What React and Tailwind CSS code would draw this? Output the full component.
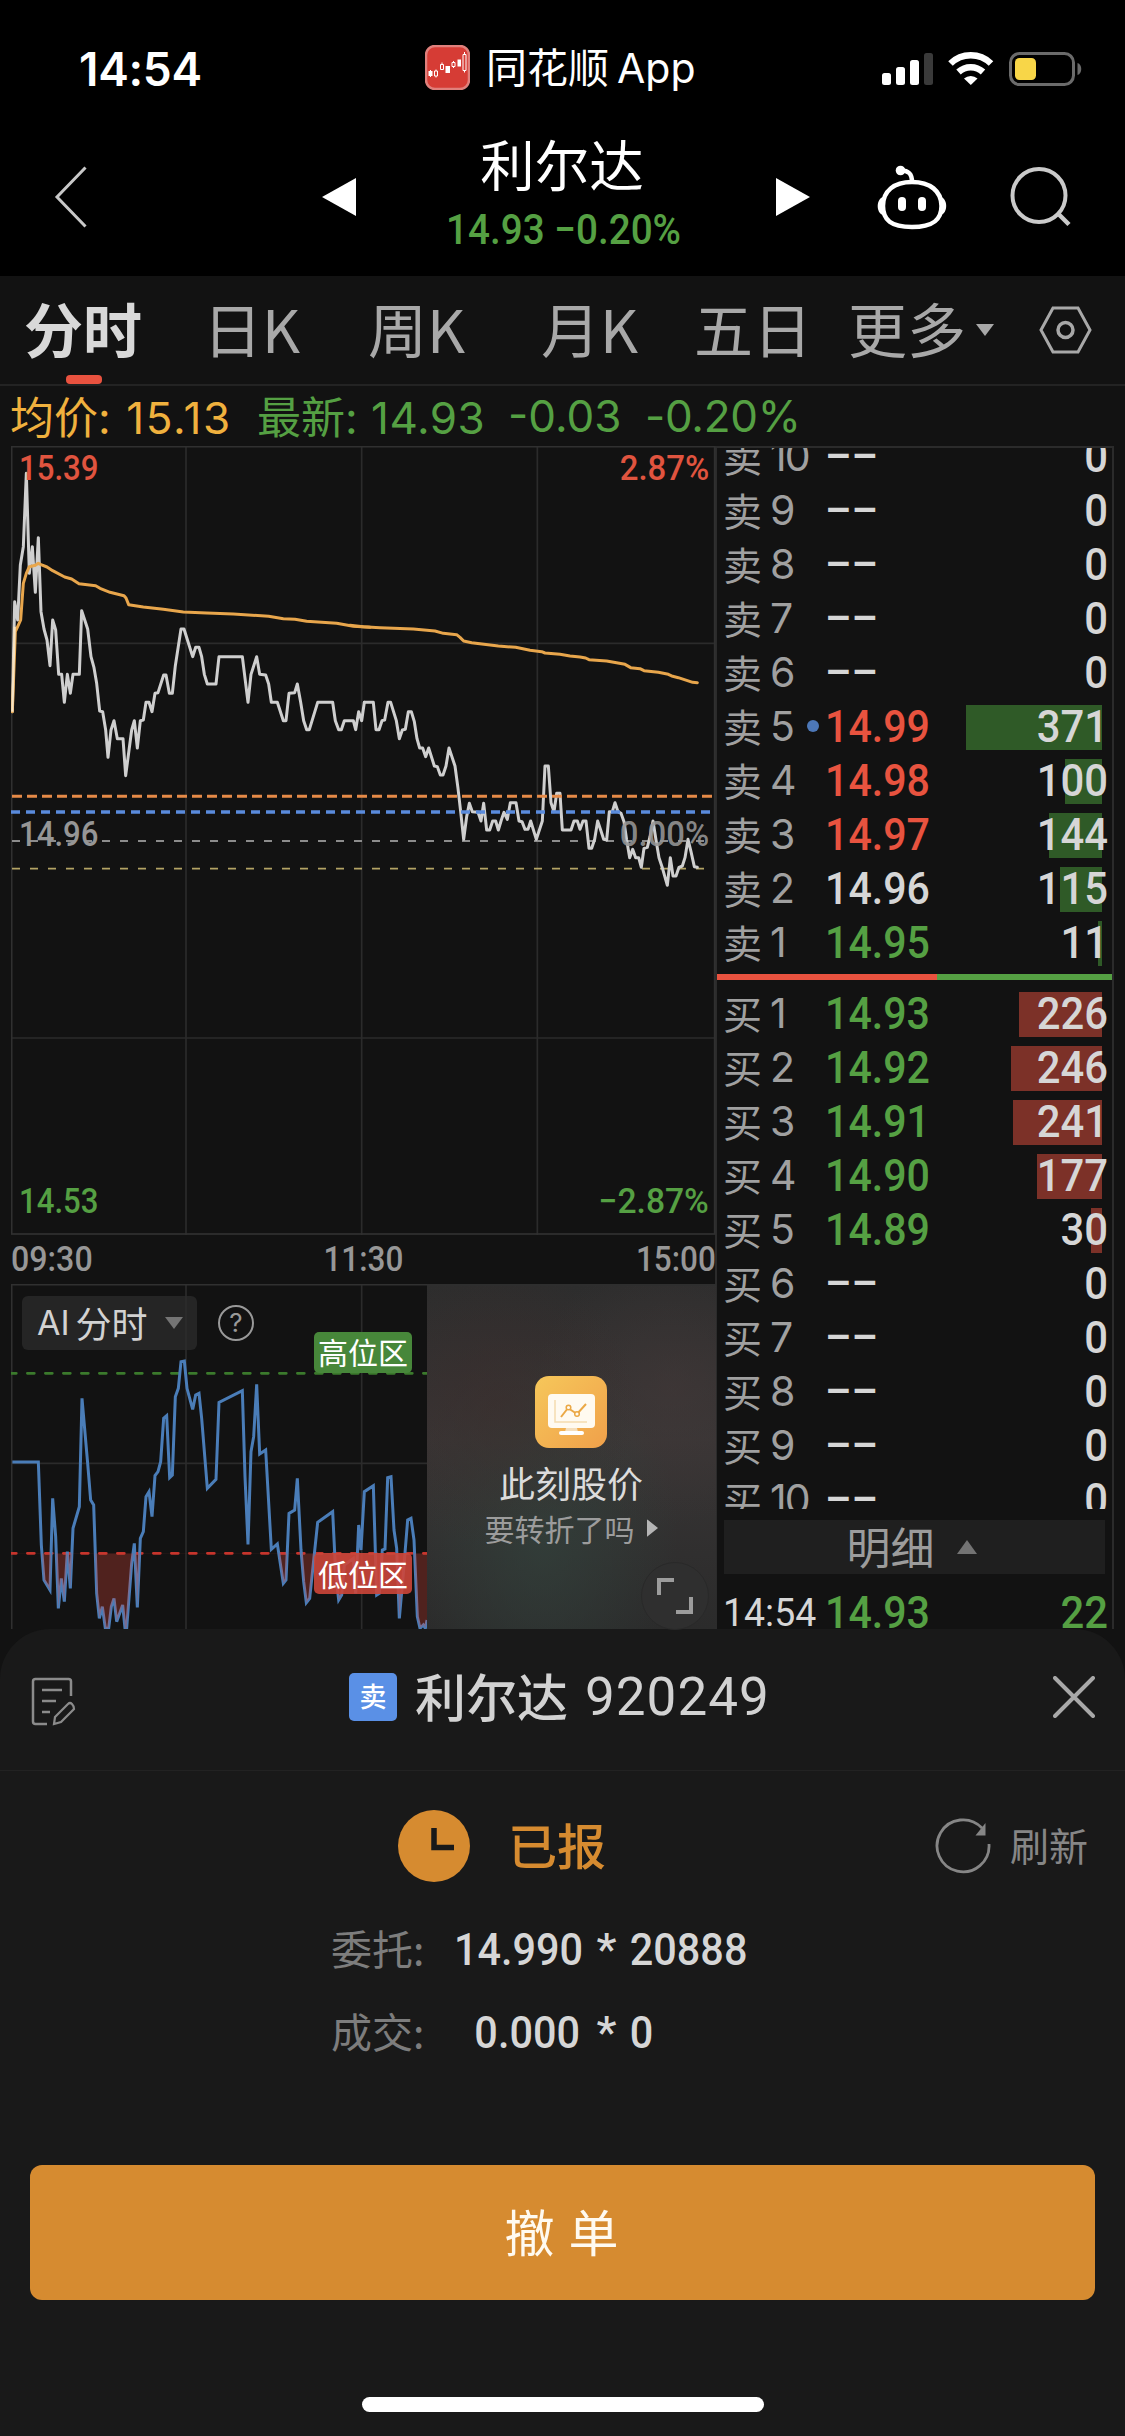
import React from 'react';
import clsx from 'clsx';

const tabs = [
  { label: '分时', width: 'w-[179px]', active: true },
  { label: '日K', width: 'w-[165px]' },
  { label: '周K', width: 'w-[173px]' },
  { label: '月K', width: 'w-[153px]' },
  { label: '五日', width: 'w-[154px]' },
];

const sells = [
  { level: 10 }, { level: 9 }, { level: 8 }, { level: 7 }, { level: 6 },
  { level: 5, price: '14.99', color: 'text-[#e8533f]', vol: 371, bar: 136, mine: true },
  { level: 4, price: '14.98', color: 'text-[#e8533f]', vol: 100, bar: 37 },
  { level: 3, price: '14.97', color: 'text-[#e8533f]', vol: 144, bar: 53 },
  { level: 2, price: '14.96', color: 'text-[#d6d6d6]', vol: 115, bar: 42 },
  { level: 1, price: '14.95', color: 'text-[#55a043]', vol: 11, bar: 4 },
];

const buys = [
  { level: 1, price: '14.93', color: 'text-[#55a043]', vol: 226, bar: 83 },
  { level: 2, price: '14.92', color: 'text-[#55a043]', vol: 246, bar: 91 },
  { level: 3, price: '14.91', color: 'text-[#55a043]', vol: 241, bar: 89 },
  { level: 4, price: '14.90', color: 'text-[#55a043]', vol: 177, bar: 65 },
  { level: 5, price: '14.89', color: 'text-[#55a043]', vol: 30, bar: 11 },
  { level: 6 }, { level: 7 }, { level: 8 }, { level: 9 }, { level: 10 },
];

const PRICE_AM = '37,815 44,485 53,540 61,375 70,320 79,100 88,400 97,320 106,457 115,293 123,515 132,567 141,600 150,677 158,540 167,570 176,703 185,703 193,787 202,703 211,760 219,703 238,703 245,512 263,567 273,650 282,683 290,730 299,813 308,815 317,870 324,952 333,870 342,842 352,896 369,896 377,1007 395,870 403,842 412,924 421,842 430,840 438,787 447,787 456,815 465,760 474,758 491,705 498,705 508,760 517,760 526,677 543,567 552,567 578,650 587,622 597,622 605,650 613,703 622,732 648,732 657,650 727,650 744,787 753,703 770,650 779,703 797,705 806,732 814,787 832,787 850,842 858,842 867,760 884,758 892,732 902,787 911,842 920,869 928,869 953,787 998,787 1006,842 1016,869 1024,869 1033,842 1060,842 1067,869 1076,815 1085,842 1093,787';
const PRICE_PM = '43,787 70,787 78,869 87,869 96,842 104,840 114,787 122,787 139,842 148,896 157,870 166,868 175,815 184,815 193,845 201,896 209,924 218,924 227,950 236,924 253,978 262,980 271,1005 279,1005 288,978 297,924 315,978 324,1045 332,1115 341,1198 350,1130 358,1090 367,1115 384,1117 393,1143 401,1090 410,1170 419,1170 428,1143 437,1143 445,1170 454,1140 462,1117 472,1138 481,1088 498,1088 507,1143 516,1145 525,1168 534,1168 542,1143 559,1198 577,1143 585,978 595,978 603,1088 612,1115 620,1060 630,1060 637,1170 663,1170 672,1143 682,1143 690,1168 699,1143 708,1143 717,1225 725,1225 734,1198 743,1143 752,1170 761,1198 770,1200 778,1115 787,1115 795,1088 804,1115 813,1120 822,1145 830,1200 839,1253 848,1228 857,1253 866,1253 874,1282 882,1225 892,1222 900,1190 909,1143 918,1200 927,1253 936,1280 952,1336 961,1253 969,1308 978,1308 987,1282 997,1278 1005,1253 1014,1198 1023,1235 1033,1280 1042,1282';
const AVG_AM = '37,815 46,575 53,560 62,540 70,430 79,400 88,380 106,376 115,370 123,374 141,381 158,392 194,411 215,417 237,431 262,434 287,437 300,445 330,457 372,467 378,474 386,494 430,501 490,508 550,516 620,519 700,522 806,529 850,536 885,538 920,544 1010,550 1060,559 1110,562';
const AVG_PM = '0,556 40,560 90,563 190,567 255,573 280,580 320,584 330,592 341,603 365,608 445,618 497,622 540,631 575,635 585,639 630,643 660,648 690,651 707,654 717,659 770,663 825,673 842,683 870,686 882,692 925,697 955,703 968,709 985,713 1010,721 1028,727 1042,728';
const AI_LINE = '37,846 115,846 124,1095 132,1200 150,1230 158,955 167,1070 175,1285 184,1195 193,1265 202,1115 211,1225 219,1045 238,980 246,655 263,850 272,960 281,975 290,1240 298,1315 307,1280 316,1345 326,1345 334,1280 342,1255 350,1325 368,1275 375,1345 380,1345 395,1150 403,1090 412,1282 421,1075 430,1055 438,950 447,935 456,1010 465,887 474,875 482,845 491,715 500,707 509,893 517,885 526,650 535,625 543,545 553,543 561,625 578,688 587,645 597,640 605,715 622,925 648,898 657,667 727,632 735,890 744,1093 753,815 761,770 770,613 779,822 797,810 814,1108 832,1092 850,1210 858,1200 867,1000 884,990 892,895 903,1110 911,1205 919,1268 929,1255 953,1027 998,995 1007,1180 1016,1260 1025,1245 1033,1155 1060,1135 1067,1240 1076,1035 1083,1110 1093,935 1120,917 1130,1245 1138,1240 1147,1110 1155,1107 1163,893 1173,890 1182,1050 1190,1105 1198,1315 1210,1180 1223,1020 1233,1015 1242,1080 1252,1310 1260,1345 1270,1335 1276,1345 1281,1320';

function StatusBar() {
  return (
    <div className="h-[118px] flex items-start bg-black text-white">
      <div className="w-[425px] pl-[79px] pt-[42px] text-[46px] leading-[54px] font-semibold tracking-[-0.3px] font-['Inter']">14:54</div>
      <svg className="mt-[45px] w-[45px] h-[45px]" viewBox="0 0 45 45">
        <rect x="1" y="1" width="43" height="43" rx="9" fill="#d63c35" stroke="#e0807c" strokeWidth="2.5" />
        <g fill="#fff">
          <rect x="3.5" y="26" width="4" height="5" />
          <rect x="5" y="25" width="1" height="7" />
          <rect x="20.5" y="21" width="4.5" height="7" />
          <rect x="32.5" y="14.5" width="3.5" height="7" />
        </g>
        <path
          d="M9.5 26h3v5h-3zM11 24.5v1.5M11 31v1.5M15.5 19.5h3v5h-3zM17 17.5v2M27 17.5h3v4h-3zM28.5 16v1.5M28.5 21.5v1.5M38 9.5h3v16h-3zM39.5 7v2.5M39.5 25.5v2"
          fill="none" stroke="#fff" strokeWidth="1"
        />
      </svg>
      <div className="w-[409px] pl-[16px] pt-[38px] text-[41px] leading-[54px] whitespace-nowrap">
        同花顺<span className="font-['Inter'] ml-[8px]">App</span>
      </div>
      <svg className="mt-[52px] w-[205px] h-[36px]" viewBox="0 0 205 36">
        <g fill="#fff">
          <rect x="3" y="21" width="9" height="12" rx="2.5" />
          <rect x="17" y="15" width="9" height="18" rx="2.5" />
          <rect x="31" y="8" width="9" height="25" rx="2.5" />
        </g>
        <rect x="45" y="1" width="9" height="32" rx="2.5" fill="#3a3a3a" />
        <g fill="none" stroke="#fff" strokeWidth="6.5">
          <path d="M71.5 11.5a29 29 0 0 1 40.5 0" />
          <path d="M79.5 20a18 18 0 0 1 24.5 0" />
        </g>
        <path d="M85 26.5a10 10 0 0 1 13.5 0l-6.7 6.5z" fill="#fff" />
        <rect x="131.5" y="1.5" width="63" height="31" rx="9" fill="none" stroke="#6b6b6b" strokeWidth="3" />
        <rect x="136" y="6" width="21" height="22" rx="4.5" fill="#f8d648" />
        <path d="M198.500 11c5 1 5 11 0 12z" fill="#6b6b6b" />
      </svg>
    </div>
  );
}

function Header() {
  return (
    <div className="h-[158px] flex items-center bg-black text-white">
      <div className="w-[322px] pl-[54px]">
        <svg className="w-[34px] h-[62px]" viewBox="0 0 34 62"><path d="M31.5 1.5L3 31l28.5 29.5" fill="none" stroke="#c8c8c8" strokeWidth="3" /></svg>
      </div>
      <svg className="w-[34px] h-[38px]" viewBox="0 0 34 38"><path d="M34 0v38L0 19z" fill="#fff" /></svg>
      <div className="w-[420px] pr-[8px] flex flex-col items-center">
        <div className="text-[54.5px] leading-[61px] h-[65px]">利尔达</div>
        <div className="text-[42px] leading-[65px] h-[65px] pl-[4px] text-[#55a043] font-['Roboto'] font-medium scale-x-[0.92] whitespace-nowrap">14.93 −0.20%</div>
      </div>
      <svg className="w-[34px] h-[38px]" viewBox="0 0 34 38"><path d="M0 0v38L34 19z" fill="#fff" /></svg>
      <svg className="ml-[66px] w-[72px] h-[66px]" viewBox="0 0 72 66">
        <g fill="none" stroke="#fff" strokeWidth="4.5">
          <path d="M36 18C54 18 65.5 27 65.5 42C65.5 56 57 63 36 63S7 56 7 42C7 27 18 18 36 18z" />
          <path d="M36 18C36 9 32 6.5 25 6.5" />
        </g>
        <circle cx="24.5" cy="6.5" r="4.8" fill="#fff" />
        <rect x="22" y="33" width="8" height="14" rx="4" fill="#fff" />
        <rect x="42" y="33" width="8" height="14" rx="4" fill="#fff" />
        <path d="M7 33C0 35 0 49 7 51zM65 33c7 2 7 16 0 18z" fill="#fff" />
      </svg>
      <svg className="ml-[62px] w-[62px] h-[62px]" viewBox="0 0 62 62">
        <circle cx="29" cy="29.5" r="26.5" fill="none" stroke="#cacaca" strokeWidth="4" />
        <path d="M48 47.5L59 58.5" stroke="#cacaca" strokeWidth="4.5" />
      </svg>
    </div>
  );
}

function Tabs() {
  return (
    <div className="h-[110px] flex items-center pl-[24px] border-b-2 border-[#232323] text-[59px] leading-[80px] text-[#a8a8a8] whitespace-nowrap">
      {tabs.map(({ label, width, active }) => (
        <div key={label} className={clsx('relative h-[84px]', width, active && 'text-[#d8d8d8] font-bold')}>
          {label}
          {active && <span className="absolute left-[42px] top-[87px] w-[36px] h-[9px] rounded-[4px] bg-[#e9523f]" />}
        </div>
      ))}
      <div className="w-[128px] h-[84px]">更多</div>
      <svg className="w-[18px] h-[12px]" viewBox="0 0 18 12"><path d="M0 0h18L9 12z" fill="#a8a8a8" /></svg>
      <svg className="ml-[45px] w-[53px] h-[48px]" viewBox="0 0 53 48">
        <path d="M14 2h25l12 22-12 22H14L2 24z" fill="none" stroke="#a8a8a8" strokeWidth="3" />
        <circle cx="26.5" cy="24" r="7.5" fill="none" stroke="#a8a8a8" strokeWidth="3.5" />
      </svg>
    </div>
  );
}

function Quote() {
  return (
    <div className="h-[60px] flex items-center pl-[10px] text-[44px] leading-[56px] whitespace-nowrap text-[#55a043]">
      <div className="w-[247px] text-[#f0b13e]">均价<span className="font-['Inter'] text-[44px] tracking-[1.6px]">: 15.13</span></div>
      <div className="w-[251px]">最新<span className="font-['Inter'] text-[44px] tracking-[0.5px]">: 14.93</span></div>
      <div className="w-[137px] font-['Inter']">-0.03</div>
      <div className="font-['Inter'] tracking-[-0.3px]">-0.20%</div>
    </div>
  );
}

function PriceChart() {
  return (
    <div className="relative h-[789px] text-[35px] leading-[40px] font-['Roboto'] font-medium">
      <svg className="w-[705px] h-[789px]" viewBox="33 18 2115 2367">
        <path d="M558 18v2367M1085 18v2367M1612 18v2367M33 610h2115M33 1794h2115" stroke="#2b2b2b" strokeWidth="5" />
        <rect x="35" y="20" width="2109" height="2362" fill="none" stroke="#303030" strokeWidth="5" />
        <g fill="none">
          <path d="M36 1203H2142" stroke="#8c8c8c" strokeWidth="6" strokeDasharray="24 30" />
          <path d="M36 1286H2142" stroke="#b3a365" strokeWidth="5" strokeDasharray="24 30" />
          <g stroke="#cfcfcf" strokeWidth="9" strokeLinejoin="round" strokeLinecap="round">
            <polyline points={PRICE_AM} />
            <polyline points={PRICE_PM} transform="translate(1050 0)" />
          </g>
          <g stroke="#e8a64c" strokeWidth="9" strokeLinejoin="round" strokeLinecap="round">
            <polyline points={AVG_AM} />
            <polyline points={AVG_PM} transform="translate(1050 0)" />
          </g>
          <path d="M37 815L44 560" stroke="#f5e3c4" strokeWidth="7" />
          <path d="M36 1069H2138" stroke="#e58a48" strokeWidth="9" strokeDasharray="30 15" />
          <path d="M33 1116H2138" stroke="#5a8bdc" strokeWidth="10" strokeDasharray="27 18" />
        </g>
      </svg>
      <span className="absolute left-[8px] top-[3px] text-[#e0543f] origin-left scale-x-[0.89]">15.39</span>
      <span className="absolute right-[7px] top-[3px] text-[#e0543f] origin-right scale-x-[0.94]">2.87%</span>
      <span className="absolute left-[8px] top-[369px] text-[#969696] origin-left scale-x-[0.89]">14.96</span>
      <span className="absolute right-[7px] top-[369px] text-[#969696]/90 origin-right scale-x-[0.94]">0.00%</span>
      <span className="absolute left-[8px] top-[736px] text-[#55a043] origin-left scale-x-[0.89]">14.53</span>
      <span className="absolute right-[7px] top-[736px] text-[#55a043] origin-right scale-x-[0.96]">−2.87%</span>
    </div>
  );
}

function TimeAxis() {
  return (
    <div className="h-[49px] flex items-center justify-between text-[35px] leading-[48px] text-[#979797] font-['Roboto'] font-medium">
      <span className="origin-left scale-x-[0.92]">09:30</span>
      <span className="scale-x-[0.9]">11:30</span>
      <span className="origin-right scale-x-[0.9]">15:00</span>
    </div>
  );
}

function AiChart() {
  return (
    <div className="relative w-[416px] h-[345px]">
      <svg className="w-[416px] h-[345px]" viewBox="33 312 1248 1035">
        <clipPath id="low-zone"><rect x="33" y="1120" width="1248" height="227" /></clipPath>
        <path d="M558 312v1035M1085 312v1035M33 850h1248" stroke="#2b2b2b" strokeWidth="5" />
        <path d="M35 1347V314H1281" fill="none" stroke="#303030" strokeWidth="5" />
        <path d="M28 580H1281" stroke="#3b7a2c" strokeWidth="8" strokeDasharray="21 33" strokeLinecap="round" />
        <path d="M28 1120H1281" stroke="#c5342c" strokeWidth="8" strokeDasharray="21 33" strokeLinecap="round" />
        <polyline points={AI_LINE} fill="none" stroke="#4a7db8" strokeWidth="9" />
        <polygon points={`${AI_LINE} 1281,1120 37,1120`} clipPath="url(#low-zone)" fill="#e24a3a" fillOpacity="0.3" />
      </svg>
      <div className="absolute left-[11px] top-[12px] w-[175px] h-[54px] rounded-[6px] bg-[#2c2c2c]/75 flex items-center pl-[15px] leading-[50px] text-[#d2d2d2] whitespace-nowrap">
        <span className="font-['Inter'] text-[34px] mr-[6px]">AI</span>
        <span className="text-[36px] h-[52px]">分时</span>
        <svg className="ml-[17px] w-[18px] h-[12px]" viewBox="0 0 18 12"><path d="M0 0h18L9 12z" fill="#747474" /></svg>
      </div>
      <div className="absolute left-[207px] top-[21px] w-[36px] h-[36px] rounded-full border-[2.5px] border-[#999] flex items-center justify-center text-[26px] leading-[30px] text-[#999] font-['Inter']">?</div>
      <div className="absolute left-[303px] top-[48px] w-[98px] h-[41px] rounded-[5px] bg-[#47873a] text-white text-[30px] leading-[39px] text-center whitespace-nowrap">高位区</div>
      <div className="absolute left-[303px] top-[269px] w-[98px] h-[41px] rounded-[5px] bg-[#cd463a]/90 text-white text-[30px] leading-[40px] text-center whitespace-nowrap">低位区</div>
    </div>
  );
}

function Promo() {
  return (
    <div className="relative w-[289px] h-[345px] pt-[90px] pr-[1px] flex flex-col items-center border-t-2 border-[#2e2e2e] bg-linear-to-b from-[#2d2d2d] via-[#383535] via-45% to-[#2b2b2b]">
      <div className="absolute inset-0 bg-[radial-gradient(ellipse_at_25%_35%,#3d2c2b88,transparent_45%),radial-gradient(ellipse_at_85%_30%,#44393988,transparent_40%),radial-gradient(ellipse_at_40%_72%,#32403bcc,transparent_55%)]" />
      <svg className="relative w-[72px] h-[72px]" viewBox="0 0 72 72">
        <defs>
          <linearGradient id="promo" x1="0" y1="0" x2="1" y2="1">
            <stop offset="0" stopColor="#f6c75a" />
            <stop offset="1" stopColor="#f0a04a" />
          </linearGradient>
        </defs>
        <rect width="72" height="72" rx="14" fill="url(#promo)" />
        <rect x="13" y="18" width="47" height="34" rx="4" fill="#fffaf0" />
        <path d="M31 52h11l1 4h-13z" fill="#f5dfbd" />
        <rect x="24" y="55" width="25" height="4" rx="2" fill="#fff" />
        <path d="M20 24v22h32" fill="none" stroke="#f5dcae" strokeWidth="1.5" />
        <path d="M26 41l7-9 9 6 9-10" fill="none" stroke="#eba845" strokeWidth="2" />
        <circle cx="33.5" cy="31.5" r="2.3" fill="#fffaf0" stroke="#eba845" strokeWidth="1.5" />
        <circle cx="42" cy="38" r="2.3" fill="#fffaf0" stroke="#eba845" strokeWidth="1.5" />
      </svg>
      <div className="relative mt-[9px] text-[36px] leading-[50px] text-[#dcdcdc]">此刻股价</div>
      <div className="relative mt-[-2px] flex items-center gap-[12px] text-[30px] leading-[46px] text-[#9c9c9c]">
        要转折了吗
        <svg className="w-[11px] h-[18px]" viewBox="0 0 11 18"><path d="M0 1q0-1 1 0l10 8-10 8q-1 1-1 0z" fill="#b5b5b5" /></svg>
      </div>
      <div className="absolute right-[7px] bottom-[-1px] w-[68px] h-[68px] rounded-full bg-[#2f2f2f] border border-[#292929] flex items-center justify-center">
        <svg className="w-[36px] h-[36px]" viewBox="0 0 36 36"><path d="M2 17V2h15M34 19v15H19" fill="none" stroke="#9c9c9c" strokeWidth="4" /></svg>
      </div>
    </div>
  );
}

function BookRow({ side, level, price, color, vol = 0, bar = 0, mine }) {
  return (
    <div className="relative h-[54px] shrink-0 flex items-center pl-[6px] pr-[4px] leading-[54px] whitespace-nowrap">
      {bar > 0 && <span className={clsx('absolute right-[10px] top-[5px] h-[45px]', side === '卖' ? 'bg-[#2f5a27]' : 'bg-[#7c3128]')} style={{ width: bar }} />}
      {mine && <span className="absolute left-[90px] top-[20px] w-[12px] h-[12px] rounded-full bg-[#4d78b8]" />}
      <span className="w-[47px] h-[59px] text-[39px] text-[#a0a0a0]">{side}</span>
      <span className="w-[55px] h-[56px] text-[41px] text-[#a0a0a0] font-['Inter'] tracking-[-2px]">{level}</span>
      <span className={clsx("text-[44px] font-['Roboto'] font-medium origin-left scale-x-[0.935]", color || 'text-[#d6d6d6]')}>{price || '––'}</span>
      <span className="relative ml-auto text-[44px] text-[#d6d6d6] font-['Roboto'] font-medium origin-right scale-x-[0.95]">{vol}</span>
    </div>
  );
}

function OrderBook() {
  return (
    <div className="-ml-[1px] w-[399px] h-[1183px] flex flex-col border-x-2 border-t-2 border-[#2b2b2b] overflow-hidden">
      <div className="h-[526px] flex flex-col justify-end overflow-hidden shrink-0">
        {sells.map(row => <BookRow key={row.level} side="卖" {...row} />)}
        <div className="h-[4px] shrink-0" />
      </div>
      <div className="h-[6px] shrink-0 flex">
        <div className="w-[220px] bg-[#e9523f]" />
        <div className="flex-1 bg-[#55a043]" />
      </div>
      <div className="h-[529px] pt-[7px] flex flex-col overflow-hidden shrink-0">
        {buys.map(row => <BookRow key={row.level} side="买" {...row} />)}
      </div>
      <div className="mt-[11px] mx-[7px] h-[54px] shrink-0 bg-[#1f1f1f] flex items-center justify-center gap-[22px] pr-[6px] leading-[50px] text-[44px] text-[#9c9c9c]">
        <span className="h-[53px]">明细</span>
        <svg className="w-[20px] h-[14px]" viewBox="0 0 20 14"><path d="M0 14h20L10 0z" fill="#737373" /></svg>
      </div>
      <div className="mt-[12px] h-[54px] shrink-0 flex items-center pl-[6px] pr-[4px] leading-[54px] font-['Roboto'] font-medium text-[44px] text-[#55a043]">
        <span className="w-[102px] text-[39px] text-[#d6d6d6] font-normal origin-left scale-x-[0.96]">14:54</span>
        <span className="origin-left scale-x-[0.935]">14.93</span>
        <span className="ml-auto origin-right scale-x-[0.95]">22</span>
      </div>
    </div>
  );
}

function OrderSheet() {
  return (
    <div className="h-[807px] rounded-t-[50px] bg-[#191919] flex flex-col">
      <div className="relative h-[142px] border-b border-[#222] flex items-start justify-between pl-[31px] pr-[30px] pt-[33px]">
        <svg className="mt-[15px] w-[46px] h-[50px]" viewBox="0 0 46 50">
          <path d="M16 47H4.5Q2 47 2 44.5V4.5Q2 2 4.5 2H37.5Q40 2 40 4.5V19" fill="none" stroke="#8b8b8b" strokeWidth="2.5" />
          <path d="M11 13h20M11 24h14M11 35h8" stroke="#8b8b8b" strokeWidth="2.5" />
          <path d="M23 47l1-7 13-13q2-2 4 0t2 5L30 45z" fill="none" stroke="#8b8b8b" strokeWidth="2.2" />
        </svg>
        <div className="absolute left-[349px] top-[33px] h-[70px] flex items-center text-[51px] leading-[66px] text-[#d2d2d2] whitespace-nowrap">
          <span className="w-[48px] h-[48px] rounded-[5px] bg-[#5a90e6] text-white text-[27px] leading-[46px] text-center font-medium">卖</span>
          <span className="ml-[18px] h-[70px] font-medium">利尔达</span>
          <span className="ml-[17px] h-[66px] text-[53px] font-['Roboto'] tracking-[1px]">920249</span>
        </div>
        <svg className="mt-[14px] w-[42px] h-[42px]" viewBox="0 0 42 42"><path d="M2 2l38 38M40 2L2 40" stroke="#a8a8a8" strokeWidth="4" strokeLinecap="round" /></svg>
      </div>
      <div className="h-[150px] flex items-center pl-[398px] pr-[37px]">
        <svg className="w-[72px] h-[72px]" viewBox="0 0 72 72">
          <circle cx="36" cy="36" r="36" fill="#d68b30" />
          <path d="M36 18v19.5h20" fill="none" stroke="#191919" strokeWidth="5.5" />
        </svg>
        <span className="ml-[38px] pb-[4px] text-[49px] font-medium text-[#d68b30]">已报</span>
        <svg className="ml-auto w-[56px] h-[56px]" viewBox="0 0 56 56">
          <path d="M54 26A26 26 0 1 1 47 10" fill="none" stroke="#868686" strokeWidth="2.8" />
          <path d="M50.5 5v12.5H40.5z" fill="#868686" />
        </svg>
        <span className="ml-[19px] pb-[4px] text-[39px] text-[#868686]">刷新</span>
      </div>
      <div className="pl-[331px] grid grid-cols-[112px_137px_47px_auto] auto-rows-[83px] items-center text-[45px] text-[#d6d6d6] font-['Roboto'] font-medium whitespace-nowrap -mt-[13px]">
        <span className="pb-[4px] text-[41px] text-[#7d7d7d] font-normal font-['Noto_Sans_CJK_SC']">委托:</span>
        <span className="text-right origin-right scale-x-[0.92]">14.990</span>
        <span className="text-center pl-[6px]">*</span>
        <span className="origin-left scale-x-[0.92] pl-[3px]">20888</span>
        <span className="pb-[4px] text-[41px] text-[#7d7d7d] font-normal font-['Noto_Sans_CJK_SC']">成交:</span>
        <span className="text-right origin-right scale-x-[0.92]">0.000</span>
        <span className="text-center pl-[6px]">*</span>
        <span className="origin-left scale-x-[0.92] pl-[3px]">0</span>
      </div>
      <button className="mt-[91px] mx-[30px] h-[135px] pb-[5px] pr-[2px] shrink-0 rounded-[12px] bg-[#d68b30] text-[#fffaf0] text-[50px] [word-spacing:3px]">撤 单</button>
      <div className="mt-[97px] mx-auto w-[402px] h-[15px] rounded-full bg-white" />
    </div>
  );
}

export default function App() {
  return (
    <div className="w-[1125px] h-[2436px] overflow-hidden bg-[#121212] font-['Noto_Sans_CJK_SC',sans-serif]">
      <StatusBar />
      <Header />
      <Tabs />
      <Quote />
      <div className="flex h-[1183px] pl-[11px]">
        <div className="w-[705px] flex flex-col">
          <PriceChart />
          <TimeAxis />
          <div className="flex">
            <AiChart />
            <Promo />
          </div>
        </div>
        <OrderBook />
      </div>
      <OrderSheet />
    </div>
  );
}
